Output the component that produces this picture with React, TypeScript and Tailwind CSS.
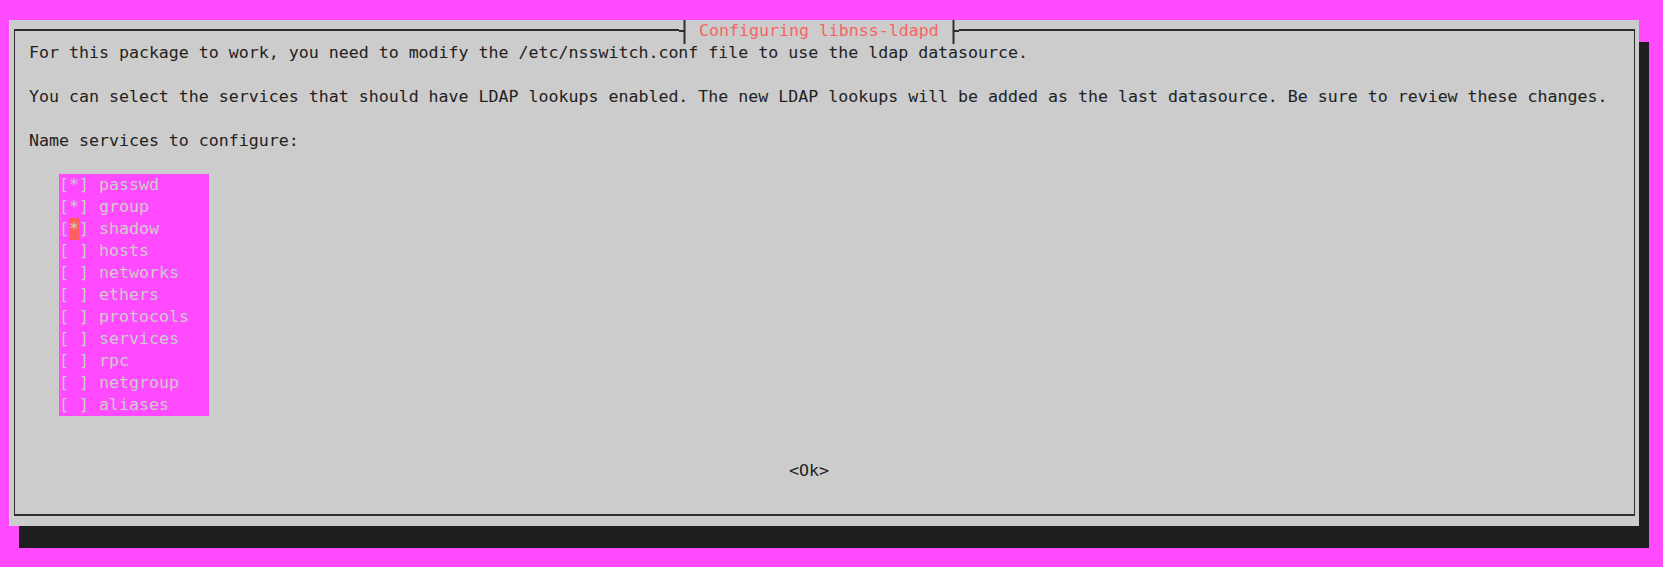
import React from "react";

const items = [
  { name: "passwd", on: true },
  { name: "group", on: true },
  { name: "shadow", on: true, cursor: true },
  { name: "hosts", on: false },
  { name: "networks", on: false },
  { name: "ethers", on: false },
  { name: "protocols", on: false },
  { name: "services", on: false },
  { name: "rpc", on: false },
  { name: "netgroup", on: false },
  { name: "aliases", on: false },
];

const mono = "font-['DejaVu_Sans_Mono','Liberation_Mono',monospace] text-[16.6px] leading-[22px]";

const Blank = () => <div className="h-[22px]" />;

const App: React.FC = () => {
  return (
    <div className={`w-[1663px] h-[567px] bg-[#ff4aff] pl-[9px] pt-[20px] ${mono}`}>
      <div className="w-[1630px] h-[506px] bg-[#cccccc] shadow-[10px_22px_0_0_#1e1e1e] pt-[9px] pl-[5px] pr-[4px] pb-[10px] flex">
        <div className="relative flex-1 border-x border-t-2 border-b-2 border-[#2e2e2e] pt-[11px] pl-[14px] text-[#222222] whitespace-pre">
          {/* title sits over the top border */}
          <div className="absolute left-[664px] top-[-11px] h-[22px] flex bg-[#cccccc]">
            <svg width="10" height="22" className="overflow-visible">
              <path d="M5.5 0V24M0 11H5.5" stroke="#2e2e2e" strokeWidth="2" fill="none" />
            </svg>
            <span className="w-[10px]" />
            <span className="text-[#f86464]">Configuring libnss-ldapd</span>
            <span className="w-[10px]" />
            <svg width="10" height="22" className="overflow-visible">
              <path d="M4.5 0V24M4.5 11H10" stroke="#2e2e2e" strokeWidth="2" fill="none" />
            </svg>
          </div>

          <div>For this package to work, you need to modify the /etc/nsswitch.conf file to use the ldap datasource.</div>
          <Blank />
          <div>
            You can select the services that should have LDAP lookups enabled. The new LDAP lookups will be added as the last datasource. Be sure to review these changes.
          </div>
          <Blank />
          <div>Name services to configure:</div>
          <Blank />

          <div className="ml-[30px] w-[150px] bg-[#ff4aff] text-[#cccccc]">
            {items.map((it) => (
              <div key={it.name} className="flex h-[22px]">
                <span>[</span>
                <span className={it.cursor ? "bg-[#ff5f5f]" : ""}>{it.on ? "*" : " "}</span>
                <span>] {it.name}</span>
              </div>
            ))}
          </div>

          <Blank />
          <Blank />
          <div className="pl-[760px]">&lt;Ok&gt;</div>
        </div>
      </div>
    </div>
  );
};

export default App;
